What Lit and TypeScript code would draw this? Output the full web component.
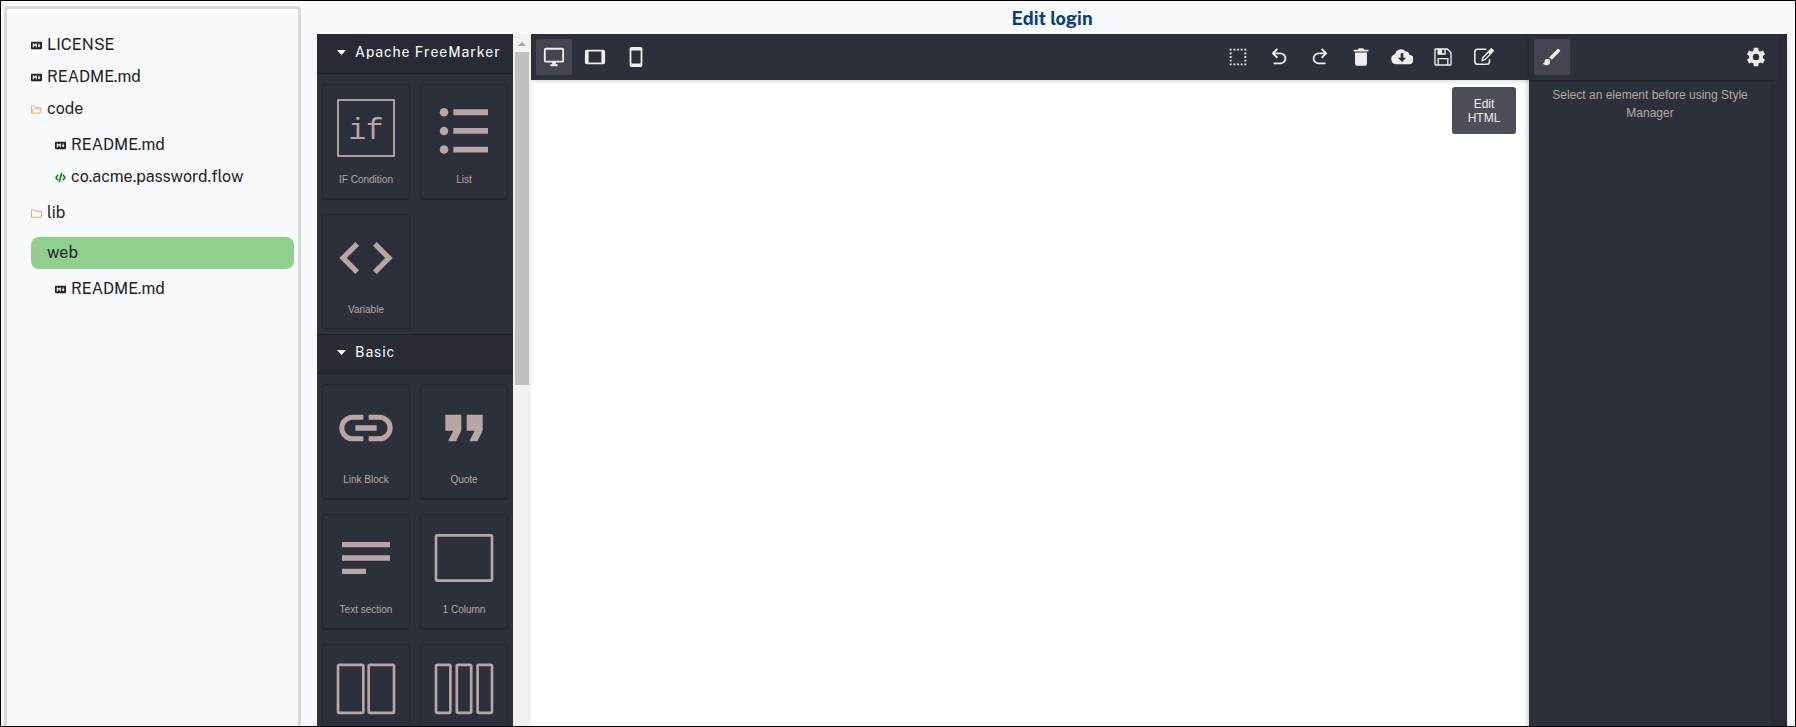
import { LitElement, html, css, svg } from "lit";
import { customElement, property } from "lit/decorators.js";

type Node = { name: string; kind: "md" | "flow" | "open" | "closed"; selected?: boolean; children?: Node[] };

const files: Node[] = [
  { name: "LICENSE", kind: "md" },
  { name: "README.md", kind: "md" },
  {
    name: "code",
    kind: "open",
    children: [
      { name: "README.md", kind: "md" },
      { name: "co.acme.password.flow", kind: "flow" },
    ],
  },
  { name: "lib", kind: "closed", children: [] },
  { name: "web", kind: "open", selected: true, children: [{ name: "README.md", kind: "md" }] },
];

const fileIcons = {
  md: svg`<path fill="#1f2125" fill-rule="evenodd" d="M1.5 2.500h13A1.500 1.500 0 0 1 16 4v8A1.500 1.500 0 0 1 14.500 13.500h-13A1.500 1.500 0 0 1 0 12V4A1.500 1.500 0 0 1 1.500 2.500zM2.500 5v6h1.600V7.700l1.400 1.700 1.400-1.700V11h1.600V5H7L5.500 6.900 4 5zM11 5v3H9.400l2.400 3 2.400-3h-1.600V5z"/>`,
  flow: svg`<path fill="none" stroke="#0a8a0a" stroke-width="2.400" d="M4.500 4L1.400 8l3.100 4M11.500 4L14.600 8l-3.100 4M9.700 1.500L6.300 14.500"/>`,
  open: svg`<path fill="none" stroke="#eda77c" stroke-width="1.400" stroke-linejoin="round" d="M.7 13V3h4.500l1.500 1.800h6.600V7M.7 13.300L3.600 7h11.700l-2.600 6.300z"/>`,
  closed: svg`<path fill="none" stroke="#eda77c" stroke-width="1.500" stroke-linejoin="round" d="M.8 2.800h4.700L7 4.600h8.200v9H.8z"/>`,
};

const blockIcons: Record<string, unknown> = {
  if: svg`<rect x="1.500" y="1.500" width="21" height="21" fill="none" stroke="currentColor" stroke-width=".7"/><text x="12" y="16.200" text-anchor="middle" class="mono">if</text>`,
  list: svg`<path fill="currentColor" d="M8 5h13v2.200H8zM8 12h13v2.200H8zM8 19h13v2.200H8z"/><circle cx="4.500" cy="6.100" r="1.600" fill="currentColor"/><circle cx="4.500" cy="13.100" r="1.600" fill="currentColor"/><circle cx="4.500" cy="20.100" r="1.600" fill="currentColor"/>`,
  variable: svg`<path fill="currentColor" d="M9.400 16.600L4.800 12l4.600-4.600L8 6l-6 6 6 6zM14.600 16.600l4.600-4.600-4.600-4.600L16 6l6 6-6 6z"/>`,
  link: svg`<path fill="currentColor" d="M3.900 12c0-1.710 1.390-3.100 3.100-3.100h4V7H7a5 5 0 0 0 0 10h4v-1.900H7c-1.710 0-3.100-1.390-3.100-3.100M8 13h8v-2H8zM17 7h-4v1.900h4a3.100 3.100 0 0 1 0 6.200h-4V17h4a5 5 0 0 0 0-10z"/>`,
  quote: svg`<path fill="currentColor" d="M14 17h3l2-4V7h-6v6h3M6 17h3l2-4V7H5v6h3z"/>`,
  text: svg`<path fill="currentColor" d="M21 6v2H3V6zM3 18h9v-2H3zM21 11v2H3v-2z"/>`,
  col1: svg`<rect class="col" x="1.500" y="3.500" width="21" height="17" rx=".5"/>`,
  col2: svg`<rect class="col" x="1.500" y="3.300" width="9.500" height="18" rx=".5"/><rect class="col" x="13" y="3.300" width="9.500" height="18" rx=".5"/>`,
  col3: svg`<rect class="col" x="1.500" y="3.300" width="5.400" height="18" rx=".5"/><rect class="col" x="9.300" y="3.300" width="5.400" height="18" rx=".5"/><rect class="col" x="17.100" y="3.300" width="5.400" height="18" rx=".5"/>`,
};

const toolIcons: Record<string, unknown> = {
  desktop: svg`<path fill="currentColor" d="M21 16H3V4h18m0-2H3a2 2 0 0 0-2 2v12a2 2 0 0 0 2 2h7v2H8v2h8v-2h-2v-2h7a2 2 0 0 0 2-2V4a2 2 0 0 0-2-2z"/>`,
  tablet: svg`<path fill="currentColor" d="M19 18H5V6h14m2-2H3a2 2 0 0 0-2 2v12a2 2 0 0 0 2 2h18a2 2 0 0 0 2-2V6a2 2 0 0 0-2-2z"/>`,
  mobile: svg`<path fill="currentColor" d="M17 19H7V5h10m0-4H7a2 2 0 0 0-2 2v18a2 2 0 0 0 2 2h10a2 2 0 0 0 2-2V3a2 2 0 0 0-2-2z"/>`,
  outline: svg`<path fill="currentColor" d="M15 5h2V3h-2m0 18h2v-2h-2M11 5h2V3h-2m8 2h2V3h-2m0 6h2V7h-2m0 14h2v-2h-2m0-6h2v-2h-2m0 6h2v-2h-2M3 5h2V3H3m0 6h2V7H3m0 6h2v-2H3m0 6h2v-2H3m0 6h2v-2H3m8 2h2v-2h-2m-4 2h2v-2H7M7 5h2V3H7z"/>`,
  undo: svg`<path fill="currentColor" d="M20 13.500A6.500 6.500 0 0 1 13.500 20H6v-2h7.500a4.500 4.500 0 1 0 0-9H7.830l3.080 3.090L9.500 13.500 4 8l5.500-5.500 1.420 1.410L7.830 7h5.670a6.500 6.500 0 0 1 6.500 6.500z"/>`,
  redo: svg`<path fill="currentColor" d="M10.500 7A6.500 6.500 0 0 0 4 13.500 6.500 6.500 0 0 0 10.500 20H18v-2h-7.500a4.500 4.500 0 1 1 0-9h5.670l-3.080 3.090 1.410 1.410L20 8l-5.500-5.500-1.410 1.410L16.170 7z"/>`,
  trash: svg`<path fill="currentColor" d="M20 4h-4.500l-1-1.500h-5L8.500 4H4v2h16M5.500 19a2.500 2.500 0 0 0 2.500 2.500h8a2.500 2.500 0 0 0 2.500-2.500V7h-13z"/>`,
  cloud: svg`<path fill="currentColor" fill-rule="evenodd" d="M20 9.500A6 6 0 0 0 19 7a3.500 3.500 0 0 0-3-1A6.500 6.500 0 0 0 4.500 8.800 5.700 5.700 0 0 0 6 20h13.500a5 5 0 0 0 .5-10.500zM12 17.500l-4.500-4.700h3V8h3v4.800h3z"/>`,
  save: svg`<path fill="currentColor" fill-rule="evenodd" d="M17 2.500H4A1.500 1.500 0 0 0 2.500 4v16A1.500 1.500 0 0 0 4 21.500h16a1.500 1.500 0 0 0 1.500-1.500V7zM11 4h2.500v4H11zM16.500 20h-9v-5.500h9zm3.500 0h-2v-7H6v7H4V4h2v5.500h9V4h1.400L20 7.600z"/>`,
  edit: svg`<path fill="none" stroke="currentColor" stroke-width="1.700" stroke-linecap="round" d="M14 3.500H5a3 3 0 0 0-3 3V17a3 3 0 0 0 3 3h10a3 3 0 0 0 3-3v-2"/><path fill="currentColor" fill-rule="evenodd" d="M20 2l3.200 3.200L13.500 15.500 9 17l1-4.800zM11.600 13.200l-.4 1.700 1.500-.5 5.300-5.600-1.100-1.100z"/>`,
  brush: svg`<path fill="currentColor" d="M20.710 4.630l-1.340-1.340a1 1 0 0 0-1.410 0L9 12.250 11.750 15l8.960-8.960a1 1 0 0 0 0-1.410M7 14a3 3 0 0 0-3 3c0 1.310-1.160 2-2 2 .92 1.220 2.500 2 4 2a4 4 0 0 0 4-4 3 3 0 0 0-3-3z"/>`,
  gear: svg`<path fill="currentColor" d="M12 15.500A3.500 3.500 0 0 1 8.500 12 3.500 3.500 0 0 1 12 8.500a3.500 3.500 0 0 1 3.500 3.500 3.500 3.500 0 0 1-3.500 3.500m7.430-2.530c.04-.32.070-.64.070-.97s-.03-.66-.07-1l2.110-1.630c.19-.15.240-.42.120-.64l-2-3.460c-.12-.22-.39-.31-.61-.22l-2.490 1c-.52-.39-1.060-.73-1.690-.98l-.37-2.650A.506.506 0 0 0 14 2h-4c-.25 0-.46.180-.5.420l-.37 2.650c-.63.250-1.170.590-1.690.980l-2.490-1c-.22-.09-.49 0-.61.220l-2 3.460c-.13.220-.07.490.12.640L4.570 11c-.04.340-.07.670-.07 1s.03.650.07.970l-2.110 1.660c-.19.150-.25.420-.12.640l2 3.460c.12.220.39.300.61.220l2.490-1.010c.52.400 1.060.740 1.690.990l.37 2.650c.04.240.25.420.5.420h4c.25 0 .46-.18.5-.42l.37-2.650c.63-.26 1.170-.59 1.690-.99l2.490 1.010c.22.080.49 0 .61-.22l2-3.460c.12-.22.070-.49-.12-.64z"/>`,
};

@customElement("file-tree")
export class FileTree extends LitElement {
  static styles = css`
    :host { display: block; }
    ul { list-style: none; margin: 0; padding: 0; }
    ul ul { padding: 4px 0 4px 24px; }
    .row {
      display: flex; align-items: center; gap: 5px; width: 100%; height: 32px;
      padding: 0; border: 0; border-radius: 8px; background: none; color: #1f2125;
      font: inherit; text-align: left;
    }
    .selected { background: #8fd08f; }
    svg { width: 11px; height: 11px; margin-top: 1px; flex: none; }
    .selected svg { opacity: 0.6; }
  `;
  private list(nodes: Node[]): unknown {
    return html`<ul>
      ${nodes.map(
        (n) => html`<li>
          <button class="row ${n.selected ? "selected" : ""}">
            <svg viewBox="0 0 16 16" aria-hidden="true">${fileIcons[n.kind]}</svg><span>${n.name}</span>
          </button>
          ${n.children ? this.list(n.children) : ""}
        </li>`
      )}
    </ul>`;
  }
  render() {
    return this.list(files);
  }
}

@customElement("tool-button")
export class ToolButton extends LitElement {
  @property() icon = "";
  @property() label = "";
  @property({ type: Boolean }) active = false;
  static styles = css`
    :host { display: block; }
    button {
      display: grid; place-items: center; width: 36px; height: 36px; padding: 0;
      border: 0; border-radius: 2px; background: none; color: #eee;
    }
    .active { background: #444550; }
    svg { width: 22px; height: 22px; }
  `;
  render() {
    return html`<button class=${this.active ? "active" : ""} aria-label=${this.label} title=${this.label}>
      <svg viewBox="0 0 24 24">${toolIcons[this.icon]}</svg>
    </button>`;
  }
}

@customElement("block-category")
export class BlockCategory extends LitElement {
  @property() name = "";
  @property({ attribute: false }) blocks: [string, string][] = [];
  static styles = css`
    :host { display: block; }
    .title {
      display: flex; align-items: center; gap: 9px; width: 100%; height: 40px;
      padding: 0 20px 3px; border: 0; border-bottom: 1px solid #20222c; background: #282a36;
      color: #fff; font: 14px/20px "Public Sans", Inter, sans-serif; letter-spacing: 1px; white-space: nowrap;
    }
    :host(:not(:first-child)) .title { border-top: 1px solid #20222c; padding-bottom: 4px; }
    .caret { width: 9px; height: 5px; flex: none; fill: #fff; }
    .grid { display: grid; grid-template-columns: 1fr 1fr; gap: 15px 10px; padding: 10px 5px 5px; }
    .card {
      display: flex; flex-direction: column; align-items: center; height: 115px; padding: 11px 0 0;
      border: 1px solid #242631; border-radius: 3px; background: none; color: #b9a5a6;
      font: 10px/16px "Liberation Sans", Arial, sans-serif; box-shadow: 0 1px 1px rgba(0, 0, 0, 0.15);
    }
    .card svg { width: 64px; height: 64px; margin-bottom: 12px; }
    .mono { font: 11px "Liberation Mono", monospace; fill: currentColor; }
    .col { fill: none; stroke: currentColor; stroke-width: 1; }
  `;
  render() {
    return html`<button class="title" aria-expanded="true">
        <svg class="caret" viewBox="0 0 9 5"><path d="M0 0h9L4.500 5z" /></svg><span>${this.name}</span>
      </button>
      <div class="grid">
        ${this.blocks.map(
          ([icon, label]) => html`<button class="card">
            <svg viewBox="0 0 24 24" aria-hidden="true">${blockIcons[icon]}</svg><span>${label}</span>
          </button>`
        )}
      </div>`;
  }
}

@customElement("app-root")
export class AppRoot extends LitElement {
  static styles = css`
    :host {
      display: flex; box-sizing: border-box; height: 100vh; overflow: hidden; gap: 16px;
      padding: 0 8px 0 3px; border: 1px solid #000; background: #f9fafc; color: #1f2125;
      font: 16px/24px "Public Sans", Inter, sans-serif;
    }
    .files {
      box-sizing: border-box; flex: none; width: 297px; margin-top: 5px; padding: 20px 4px 0 24px;
      border: 3px solid #d9d9d9; border-bottom: 0; border-radius: 4px 4px 0 0;
    }
    .main { display: flex; flex-direction: column; flex: 1; min-width: 0; }
    h1 { margin: 0; padding: 6px 0 3px; font-size: 18px; line-height: 24px; font-weight: 700; color: #0d3c78; text-align: center; }
    .editor { display: flex; flex: 1; min-height: 0; background: #2c303a; }
    .blocks { flex: none; width: 196px; overflow-y: auto; scrollbar-width: none; }
    .scroll { flex: none; width: 18px; box-sizing: border-box; padding: 0 2px; background: #f1f1f1; }
    .arrow { display: block; width: 8px; height: 4px; padding: 8px 3px 6px; fill: #a3a3a3; }
    .thumb { height: 333px; background: #c1c1c1; }
    .stage { display: flex; flex-direction: column; flex: 1; min-width: 0; overflow: hidden; }
    .bar { display: flex; gap: 5px; padding: 5px; }
    .stage .bar { position: relative; z-index: 1; padding-right: 27px; box-shadow: 0 0 5px rgba(0, 0, 0, 0.25); background: #2c303a; }
    .push { margin-left: auto; }
    .canvas { position: relative; flex: 1; background: #fff; }
    .edit-html {
      position: absolute; top: 7px; right: 13px; width: 64px; padding: 10px 8px 9px; border: 0;
      border-radius: 3px; background: #4c4f5a; color: #f0f0f0; font: 12px/14px "Liberation Sans", Arial, sans-serif;
    }
    .styles {
      display: flex; flex-direction: column; flex: none; box-sizing: border-box; width: 258px;
      border-right: 8px solid #282a36; box-shadow: -1px 5px 5px rgba(0, 0, 0, 0.25); z-index: 2;
    }
    .note {
      flex: 1; margin: 0; padding: 4px 10px; border-top: 2px solid #252732; border-right: 8px solid #292c37;
      color: #b9a5a6; font: 12px/18px "Liberation Sans", Arial, sans-serif; text-align: center;
    }
  `;
  render() {
    return html`
      <nav class="files" aria-label="Files"><file-tree></file-tree></nav>
      <main class="main">
        <h1>Edit login</h1>
        <div class="editor">
          <section class="blocks" aria-label="Blocks">
            <block-category
              name="Apache FreeMarker"
              .blocks=${[["if", "IF Condition"], ["list", "List"], ["variable", "Variable"]]}
            ></block-category>
            <block-category
              name="Basic"
              .blocks=${[["link", "Link Block"], ["quote", "Quote"], ["text", "Text section"], ["col1", "1 Column"], ["col2", "2 Columns"], ["col3", "3 Columns"]]}
            ></block-category>
          </section>
          <div class="scroll" aria-hidden="true">
            <svg class="arrow" viewBox="0 0 8 4"><path d="M4 0l4 4H0z" /></svg>
            <div class="thumb"></div>
          </div>
          <section class="stage" aria-label="Canvas">
            <div class="bar">
              <tool-button icon="desktop" label="Desktop" active></tool-button>
              <tool-button icon="tablet" label="Tablet"></tool-button>
              <tool-button icon="mobile" label="Mobile"></tool-button>
              <tool-button class="push" icon="outline" label="View components"></tool-button>
              <tool-button icon="undo" label="Undo"></tool-button>
              <tool-button icon="redo" label="Redo"></tool-button>
              <tool-button icon="trash" label="Clear"></tool-button>
              <tool-button icon="cloud" label="Download"></tool-button>
              <tool-button icon="save" label="Save"></tool-button>
              <tool-button icon="edit" label="Edit"></tool-button>
            </div>
            <div class="canvas"><button class="edit-html">Edit HTML</button></div>
          </section>
          <aside class="styles" aria-label="Style Manager">
            <div class="bar">
              <tool-button icon="brush" label="Styles" active></tool-button>
              <tool-button class="push" icon="gear" label="Settings"></tool-button>
            </div>
            <p class="note">Select an element before using Style Manager</p>
          </aside>
        </div>
      </main>
    `;
  }
}
